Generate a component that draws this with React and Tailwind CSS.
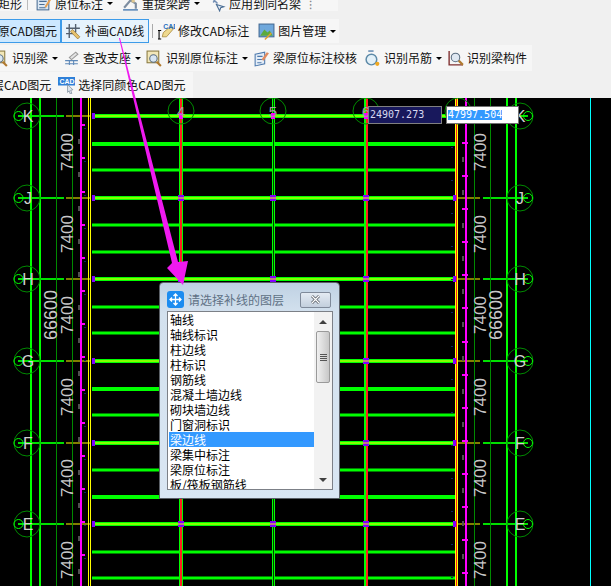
import React from "react";

const cjk = "font-['Noto_Sans_CJK_SC','Liberation_Sans',sans-serif]";

// y of the grid axes in page coordinates
const axes = [
  { y: 116, name: "K" },
  { y: 198, name: "J" },
  { y: 279, name: "H" },
  { y: 361, name: "G" },
  { y: 443, name: "F" },
  { y: 524, name: "E" },
];
const beams = [
  [144, 4], [170, 3], [225, 3], [252, 3], [307, 3], [333, 3],
  [389, 4], [415, 3], [470, 3], [497, 4], [552, 3], [578, 3],
];
const dims = [152, 234, 315, 397, 478, 560];
const leftTicks = [125, 158, 192, 225, 258, 291, 324, 357, 390, 423, 456, 489, 522, 555];
const rightTicks = [143, 176, 209, 242, 275, 308, 342, 375, 408, 441, 474, 507, 540, 573];
const layers = [
  "轴线", "轴线标识", "柱边线", "柱标识", "钢筋线", "混凝土墙边线", "砌块墙边线",
  "门窗洞标识", "梁边线", "梁集中标注", "梁原位标注", "板/筏板钢筋线",
];

function Caret() {
  return <span className="ml-[4px] w-0 h-0 border-x-[3px] border-x-transparent border-t-[3px] border-t-black" />;
}

// small toolbar pictures, all drawn on a 16x16 box
function Icon({ kind }) {
  return (
    <svg width="17" height="17" viewBox="0 0 16 16" className="shrink-0">
      {kind === "doc" && (
        <>
          <rect x="2" y="3" width="11" height="11" fill="#dce8f4" stroke="#4a6d94" />
          <path d="M4 6h7M4 9h5M4 12h6" stroke="#4a6d94" />
          <path d="M9 11l5-8 1.5 1-5 8z" fill="#e8a050" />
        </>
      )}
      {kind === "beam" && (
        <>
          <path d="M2 12L8 5l5 3v5" fill="none" stroke="#7d8da0" strokeWidth="2" />
          <path d="M1 14h14" stroke="#5d88b8" strokeWidth="1.5" />
          <rect x="9" y="3" width="3" height="4" fill="#e0c890" />
        </>
      )}
      {kind === "same" && (
        <>
          <path d="M2 2l6 6M8 1L4 7" stroke="#7590b5" strokeWidth="1.5" />
          <path d="M7 9l7 2-3 1-1 3z" fill="#dfe8f2" stroke="#4a6d94" />
        </>
      )}
      {kind === "draw" && (
        <>
          <path d="M4 1v13M10 1v8M1 5h13M1 10h8" stroke="#54606e" strokeWidth="1.3" />
          <path d="M7 6l7 7-2 2-7-7z" fill="#e6c26e" stroke="#8c6a26" strokeWidth=".6" />
        </>
      )}
      {kind === "edit" && (
        <>
          <path d="M5 9l7-6 3 2-7 8H4z" fill="#efd98e" stroke="#a08030" strokeWidth=".7" />
          <path d="M1 7v8M0 7h3M0 15h3" stroke="#000" />
          <text x="5" y="6" fontSize="6.5" fontWeight="700" fill="#2a6fc0" fontFamily="Liberation Sans, sans-serif">CAD</text>
        </>
      )}
      {kind === "pic" && (
        <>
          <rect x="1" y="1" width="14" height="12" fill="#6fa8dc" stroke="#446a94" />
          <path d="M2 12l4-6 3 3 2-2 3 5z" fill="#5caa3c" />
          <path d="M6 15l6-6 1 1-6 6z" fill="#e0a030" />
        </>
      )}
      {kind === "scan" && (
        <>
          <rect x="1" y="1" width="11" height="11" fill="#f2e7b8" stroke="#8a7a40" />
          <circle cx="7" cy="8" r="3.5" fill="#d8e6f2" stroke="#5a6d80" />
          <path d="M10 11l4 4" stroke="#b07a30" strokeWidth="2" />
        </>
      )}
      {kind === "support" && (
        <>
          <path d="M2 10h12M2 13h12M6 10v4M10 10v4" stroke="#5d88b8" />
          <path d="M6 7l6-5 2 2-6 5z" fill="#e4e4e4" stroke="#9a9a9a" />
        </>
      )}
      {kind === "check" && (
        <>
          <path d="M2 4l9-2v11l-9 2z" fill="#e4edf7" stroke="#4d79ad" />
          <path d="M4 6h5M4 9h5M4 12h4" stroke="#4d79ad" />
          <path d="M8 9l5-7 2 1-5 7z" fill="#e08a60" />
        </>
      )}
      {kind === "hook" && (
        <>
          <path d="M4 1h5" stroke="#6a8fb5" strokeWidth="1.5" />
          <circle cx="7" cy="9" r="5" fill="#e2f0f8" stroke="#5d8aa8" strokeWidth="1.4" />
          <circle cx="12.5" cy="13" r="2" fill="#f0a820" />
        </>
      )}
      {kind === "find" && (
        <>
          <path d="M2 1v13h13" fill="none" stroke="#803030" strokeWidth="1.3" />
          <circle cx="8" cy="7" r="4" fill="#dfe8f2" stroke="#5a6d80" />
          <path d="M11 10l4 4" stroke="#b07a30" strokeWidth="2" />
        </>
      )}
      {kind === "color" && (
        <>
          <rect x="0" y="0" width="16" height="8" fill="#2f80d8" />
          <text x="1.5" y="6.5" fontSize="6.5" fontWeight="700" fill="#fff" fontFamily="Liberation Sans, sans-serif">CAD</text>
          <path d="M9 7l5 5-2 .5 1 3-1.500 .5-1-3-1.500 1.500z" fill="#dfe6ee" stroke="#6a7a8c" strokeWidth=".6" />
        </>
      )}
    </svg>
  );
}

function Tool({ icon, label, caret, className = "" }) {
  return (
    <div className={`flex items-center shrink-0 ${className}`}>
      {icon && <Icon kind={icon} />}
      <span className="ml-[3px] whitespace-nowrap">{label}</span>
      {caret && <Caret />}
    </div>
  );
}

function Toolbar() {
  return (
    <div className={`h-[98px] bg-[#f0f0f0] text-[12px] leading-none text-[#111] overflow-hidden ${cjk}`}>
      <div className="h-[15px] w-[338px] bg-[#f6f6f6] flex items-center -mt-[4px]">
        <span className="ml-[-2px] w-[24px] whitespace-nowrap">矩形</span>
        <span className="ml-[5px] h-[13px] w-px bg-[#bbb]" />
        <Tool icon="doc" label="原位标注" caret className="ml-[7px]" />
        <Tool icon="beam" label="重提梁跨" caret className="ml-[9px]" />
        <Tool icon="same" label="应用到同名梁" className="ml-[9px]" />
        <span className="ml-[8px] text-[#888]">⁝</span>
      </div>
      <div className="h-[24px] mt-[8px] w-[339px] bg-[#f6f6f6] flex items-center">
        <div className="h-[24px] w-[61px] shrink-0 bg-[#cce8ff] border border-[#3d9be9] border-l-0 flex items-center justify-end pr-[3px] whitespace-nowrap">
          原CAD图元
        </div>
        <div className="h-[24px] w-[88px] shrink-0 bg-[#e6f3fd] border border-[#3d9be9] flex items-center pl-[3px]">
          <Icon kind="draw" />
          <span className="ml-[3px] whitespace-nowrap">补画CAD线</span>
        </div>
        <span className="ml-[3px] h-[14px] w-px bg-[#aaa]" />
        <Tool icon="edit" label="修改CAD标注" className="ml-[5px]" />
        <Tool icon="pic" label="图片管理" caret className="ml-[9px]" />
      </div>
      <div className="h-[26px] mt-[2px] w-[532px] bg-[#f6f6f6] flex items-center">
        <Tool icon="scan" label="识别梁" caret className="-ml-[8px]" />
        <Tool icon="support" label="查改支座" caret className="ml-[5px]" />
        <Tool icon="scan" label="识别原位标注" caret className="ml-[5px]" />
        <Tool icon="check" label="梁原位标注校核" className="ml-[5px]" />
        <Tool icon="hook" label="识别吊筋" caret className="ml-[7px]" />
        <Tool icon="find" label="识别梁构件" className="ml-[5px]" />
      </div>
      <div className="h-[26px] mt-px w-[193px] bg-[#f6f6f6] flex items-center overflow-hidden">
        <span className="-ml-[8px] whitespace-nowrap">层CAD图元</span>
        <Tool icon="color" label="选择同颜色CAD图元" className="ml-[7px]" />
      </div>
    </div>
  );
}

// the plan drawing, in page coordinates
function Drawing() {
  const dimText = "fill-[#c8c8c8] text-[17px] font-['Liberation_Sans',sans-serif]";
  const totalText = "fill-[#c8c8c8] text-[18px] font-['Liberation_Sans',sans-serif]";
  return (
    <svg viewBox="0 98 611 488" width="611" height="488" className="block">
      <rect x="0" y="98" width="611" height="488" fill="#000" />

      {beams.map(([y, h]) => (
        <rect key={y} x="92" y={y - h / 2} width="364" height={h} fill="#00ff00" />
      ))}

      {axes.map(({ y }) => (
        <g key={y}>
          <rect x="92" y={y - 2} width="364" height="4" fill="#00ff00" />
          <rect x="92" y={y - 0.5} width="364" height="1" fill="#ffff00" />
          <rect x="18" y={y - 1} width="46" height="2" fill="#00e000" />
          <rect x="66" y={y - 0.5} width="24" height="1" fill="#ffff00" />
          <rect x="483" y={y - 1} width="45" height="2" fill="#00e000" />
          <rect x="458" y={y - 0.5} width="22" height="1" fill="#ffff00" />
        </g>
      ))}

      {/* outer column lines */}
      <rect x="30" y="98" width="2" height="488" fill="#00ff00" />
      <rect x="39" y="98" width="2" height="488" fill="#00ff00" />
      <rect x="56" y="98" width="1" height="488" fill="#008a00" />
      <rect x="72" y="98" width="1" height="488" fill="#008a00" />
      <rect x="80" y="98" width="2" height="488" fill="#ff00ff" />
      <rect x="88" y="98" width="1" height="488" fill="#ffff00" />
      <rect x="90" y="98" width="1" height="488" fill="#ffff00" />
      <rect x="455" y="98" width="1" height="488" fill="#ffff00" />
      <rect x="456" y="98" width="1" height="488" fill="#ff2020" />
      <rect x="457" y="98" width="1" height="488" fill="#ffff00" />
      <rect x="465" y="98" width="2" height="488" fill="#ff00ff" />
      <rect x="474" y="98" width="1" height="488" fill="#008a00" />
      <rect x="490" y="98" width="1" height="488" fill="#008a00" />
      <rect x="506" y="98" width="2" height="488" fill="#00ff00" />
      <rect x="515" y="98" width="2" height="488" fill="#00ff00" />
      <rect x="590" y="98" width="1" height="488" fill="#00ffff" />

      {/* inner columns */}
      <rect x="179" y="98" width="4" height="488" fill="#00ff00" />
      <rect x="180" y="98" width="2" height="488" fill="#ff2020" />
      <rect x="272" y="98" width="3" height="488" fill="#00ff00" />
      <rect x="273" y="98" width="1" height="488" fill="#004000" />
      <rect x="364" y="98" width="4" height="488" fill="#00ff00" />
      <rect x="366" y="98" width="2" height="488" fill="#ff2020" />

      {leftTicks.map((y) => (
        <g key={y}>
          <rect x="81" y={y - 1} width="4" height="2" fill="#ff00ff" />
          <rect x="78" y={y + 14} width="2" height="5" fill="#505050" />
          <rect x="84" y={y + 3} width="2" height="1" fill="#102060" />
        </g>
      ))}
      {rightTicks.map((y) => (
        <g key={y}>
          <rect x="462" y={y - 1} width="6" height="2" fill="#ff00ff" />
          <rect x="462" y={y + 14} width="2" height="5" fill="#505050" />
          <rect x="451" y={y + 4} width="2" height="1" fill="#102060" />
        </g>
      ))}

      {/* purple markers where beams meet columns */}
      {axes.map(({ y }) =>
        [181, 273, 366].map((x) =>
          y === 116 ? (
            <rect key={x} x={x - 2} y={y - 3} width="4" height="6" fill="#ff00ff" />
          ) : (
            <g key={x}>
              <rect x={x - 3} y={y - 3} width="6" height="6" fill="#8000ff" />
              <rect x={x - 3} y={y - 0.5} width="6" height="1" fill="#ffff00" />
            </g>
          )
        )
      )}
      {axes.map(({ y }) => (
        <g key={y}>
          <rect x="92" y={y - 3} width="3" height="6" fill="#8000ff" />
          <rect x="453" y={y - 3} width="3" height="6" fill="#8000ff" />
        </g>
      ))}

      {/* axis bubbles */}
      {axes.map(({ y, name }) => (
        <g key={name}>
          <circle cx="27" cy={y} r="13" fill="none" stroke="#008a00" />
          <circle cx="18.500" cy={y} r="4.500" fill="none" stroke="#00ff00" />
          <circle cx="520" cy={y} r="13" fill="none" stroke="#008a00" />
          <circle cx="528" cy={y} r="4.500" fill="none" stroke="#00ff00" />
          <text x="28" y={y + 6} textAnchor="middle" className="fill-[#d0d0d0] text-[16px] font-['Liberation_Sans',sans-serif]">{name}</text>
          <text x="520" y={y + 6} textAnchor="middle" className="fill-[#d0d0d0] text-[16px] font-['Liberation_Sans',sans-serif]">{name}</text>
        </g>
      ))}
      {[[181, "4"], [273, "5"], [366, "6"], [458, "7"]].map(([x, t]) => (
        <g key={x}>
          <circle cx={x} cy="111" r="13" fill="none" stroke="#008a00" />
          <text x={x} y="117" textAnchor="middle" className="fill-[#a0a0a0] text-[15px] font-['Liberation_Sans',sans-serif]">{t}</text>
        </g>
      ))}

      {/* dimension text */}
      {dims.map((y) => (
        <g key={y}>
          <text transform={`translate(73 ${y}) rotate(-90)`} textAnchor="middle" className={dimText}>7400</text>
          <text transform={`translate(486 ${y}) rotate(-90)`} textAnchor="middle" className={dimText}>7400</text>
        </g>
      ))}
      <text transform="translate(57 315) rotate(-90)" textAnchor="middle" className={totalText}>66600</text>
      <text transform="translate(502 315) rotate(-90)" textAnchor="middle" className={totalText}>66600</text>
    </svg>
  );
}

function CoordBoxes() {
  const mono = "font-['DejaVu_Sans_Mono',monospace] text-[10px] leading-[10px]";
  return (
    <>
      <div className={`absolute left-[368px] top-[8px] w-[74px] h-[18px] bg-[#18185c] border border-[#808080] text-[#d8d8f0] pl-px flex items-center ${mono}`}>
        24907.273
      </div>
      <div className={`absolute left-[446px] top-[8px] w-[73px] h-[18px] bg-white border border-[#707070] pl-px flex items-center ${mono}`}>
        <span className="bg-[#3399ff] text-white">47997.504</span>
      </div>
    </>
  );
}

function LayerDialog() {
  return (
    <div className={`absolute left-[159px] top-[184px] w-[181px] h-[217px] rounded-t-[4px] border border-[#5a5f66] bg-gradient-to-b from-[#bfd1e3] via-[#d3e1ee] via-[14%] to-[#d9e6f3] px-[7px] pt-[8px] ${cjk}`}>
      <div className="flex items-center h-[17px]">
        <div className="w-[17px] h-[17px] rounded-[3px] bg-[#1c8cf0] flex items-center justify-center">
          <svg width="13" height="13" viewBox="0 0 13 13">
            <path d="M6.500 1v11M1 6.500h11M4.500 3l2-2 2 2M4.500 10l2 2 2-2M3 4.500l-2 2 2 2M10 4.500l2 2-2 2" fill="none" stroke="#fff" strokeWidth="1.300" />
          </svg>
        </div>
        <span className="ml-[4px] text-[12px] leading-none text-[#5f7185] whitespace-nowrap">请选择补线的图层</span>
        <div className="ml-auto mr-[1px] w-[31px] h-[16px] rounded-[2px] border border-[#7f8a9a] bg-gradient-to-b from-[#e4ebf3] to-[#c3cfdd] flex items-center justify-center">
          <svg width="11" height="9" viewBox="0 0 11 9">
            <path d="M2 1l7 7M9 1L2 8" stroke="#4a4f58" strokeWidth="2.600" />
            <path d="M2 1l7 7M9 1L2 8" stroke="#fff" strokeWidth="1.300" />
          </svg>
        </div>
      </div>
      <div className="mt-[3px] h-[179px] w-[166px] bg-white border border-[#7c8087] flex overflow-hidden">
        <ul className="w-[146px] pl-px text-[12px] leading-[15px] text-black overflow-hidden">
          {layers.map((name) => (
            <li key={name} className={`h-[15px] pl-px whitespace-nowrap ${name === "梁边线" ? "bg-[#3399ff] text-white" : ""}`}>
              {name}
            </li>
          ))}
        </ul>
        <div className="w-[18px] bg-[#f2f2f2] flex flex-col items-center">
          <span className="mt-[8px] w-0 h-0 border-x-[4px] border-x-transparent border-b-[4px] border-b-[#404040]" />
          <div className="mt-[7px] w-[14px] h-[52px] rounded-[2px] border border-[#9a9a9a] bg-gradient-to-r from-[#f0f0f0] to-[#c8c8c8] flex flex-col items-center justify-center gap-px">
            <span className="w-[7px] h-px bg-[#555]" />
            <span className="w-[7px] h-px bg-[#555]" />
            <span className="w-[7px] h-px bg-[#555]" />
            <span className="w-[7px] h-px bg-[#555]" />
          </div>
          <span className="mt-auto mb-[7px] w-0 h-0 border-x-[4px] border-x-transparent border-t-[4px] border-t-[#404040]" />
        </div>
      </div>
    </div>
  );
}

export default function App() {
  return (
    <div className="relative w-[611px] h-[586px] overflow-hidden bg-black">
      <Toolbar />
      <div className="relative h-[488px]">
        <Drawing />
        <CoordBoxes />
        <LayerDialog />
      </div>
      {/* callout arrow sits over toolbar and dialog */}
      <svg viewBox="0 0 611 586" width="611" height="586" className="absolute inset-0 pointer-events-none">
        <path d="M119 38L120 38L178 262L188 261L183 285L167 268L172 263Z" fill="#f01af0" />
      </svg>
    </div>
  );
}
